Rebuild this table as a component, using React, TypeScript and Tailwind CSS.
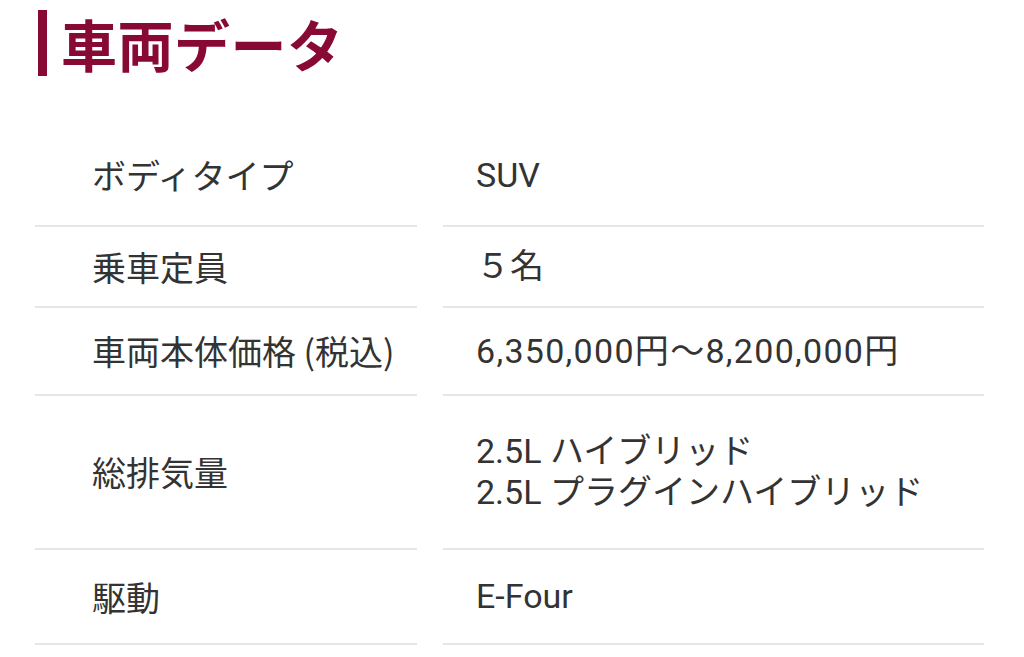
const rows: { label: string; value: string[]; h: string; vc?: string }[] = [
  { label: "ボディタイプ", value: ["SUV"], h: "h-[102px]" },
  { label: "乗車定員", value: ["５名"], h: "h-[81px]" },
  { label: "車両本体価格 (税込)", value: ["6,350,000円〜8,200,000円"], h: "h-[88px]", vc: "tracking-[1.3px]" },
  { label: "総排気量", value: ["2.5L ハイブリッド", "2.5L プラグインハイブリッド"], h: "h-[154px]" },
  { label: "駆動", value: ["E-Four"], h: "h-[95px]" },
];

export default function App() {
  return (
    <div className="w-[1024px] h-[657px] overflow-hidden bg-white font-['Noto_Sans_CJK_JP',sans-serif] text-[#333]">
      <div className="flex items-center pt-[10px] pl-[38px]">
        <div className="w-[9px] h-[66px] bg-[#880933]" />
        <h2 className="ml-[14px] text-[56px] leading-[66px] font-bold text-[#880933] tracking-[0.5px]">
          車両データ
        </h2>
      </div>

      <div className="mt-[49px] ml-[35px] grid grid-cols-[382px_541px] gap-x-[26px]">
        {rows.map((row) => (
          <div key={row.label} className="contents">
            <div
              className={`${row.h} flex items-center pl-[57px] border-b-2 border-[#e6e6e6] text-[34px] leading-[40px]`}
            >
              {row.label}
            </div>
            <div
              className={`${row.h} flex flex-col justify-center pl-[33px] border-b-2 border-[#e6e6e6] text-[34px] leading-[41px] font-['Roboto','Noto_Sans_CJK_JP',sans-serif] ${row.vc ?? ""}`}
            >
              {row.value.map((v) => (
                <span key={v}>{v}</span>
              ))}
            </div>
          </div>
        ))}
      </div>
    </div>
  );
}
